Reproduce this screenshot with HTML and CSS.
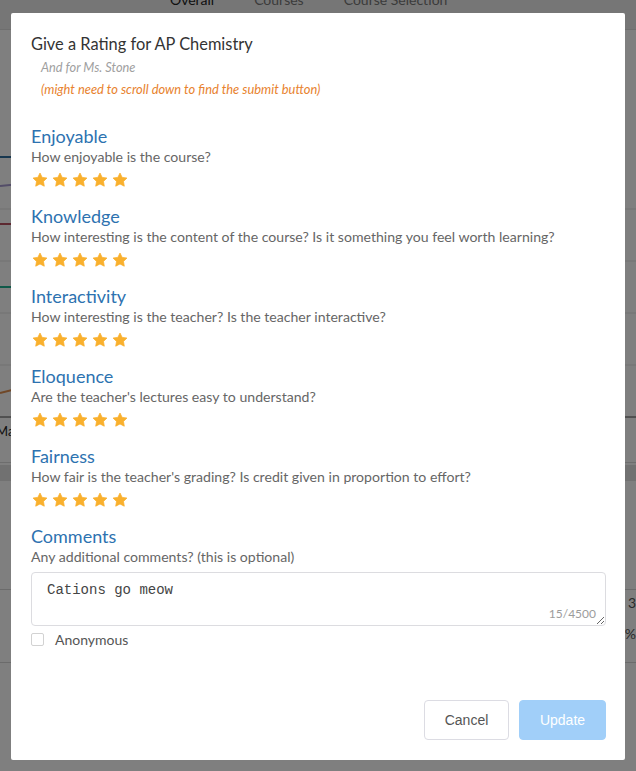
FILE: index.html
```html
<!DOCTYPE html>
<html>
<head>
<meta charset="utf-8">
<link rel="stylesheet" href="styles.css">
</head>
<body>
<svg class="defs" width="0" height="0">
  <defs>
    <symbol id="star" viewBox="0 0 24 24">
      <polygon points="12,1.6 15.2,8.1 22.4,9.1 17.2,14.1 18.4,21.3 12,17.9 5.6,21.3 6.8,14.1 1.6,9.1 8.8,8.1" stroke-linejoin="round" stroke-width="1.2"/>
    </symbol>
  </defs>
</svg>
<div class="page">
  <nav class="topnav">
    <span class="navlink active">Overall</span>
    <span class="navlink">Courses</span>
    <span class="navlink">Course Selection</span>
  </nav>
  <div class="content">
    <svg class="chart" width="636" height="420" viewBox="0 30 636 420">
      <line x1="0" y1="209" x2="636" y2="209" class="grid"/>
      <line x1="0" y1="261" x2="636" y2="261" class="grid"/>
      <line x1="0" y1="313" x2="636" y2="313" class="grid"/>
      <line x1="0" y1="365" x2="636" y2="365" class="grid"/>
      <path d="M0 157 L20 157" class="l-blue"/>
      <path d="M0 186 L20 184" class="l-purple"/>
      <path d="M0 224 L20 224" class="l-red"/>
      <path d="M0 287 L20 287" class="l-teal"/>
      <path d="M0 393 L20 388" class="l-orange"/>
      <line x1="0" y1="417" x2="636" y2="417" class="axis"/>
      <text x="-4" y="436" class="axislabel">Mar</text>
    </svg>
    <div class="lower">
      <div class="band"></div>
      <div class="stat"><span>3</span><span>%</span></div>
    </div>
  </div>
</div>
<div class="overlay"></div>
<div class="modal">
  <div class="modal-body">
    <h1 class="title">Give a Rating for AP Chemistry</h1>
    <p class="subtitle">And for Ms. Stone</p>
    <p class="hint">(might need to scroll down to find the submit button)</p>

    <section class="crit">
      <h2>Enjoyable</h2>
      <p class="q">How enjoyable is the course?</p>
      <div class="stars"><svg><use href="#star"/></svg><svg><use href="#star"/></svg><svg><use href="#star"/></svg><svg><use href="#star"/></svg><svg><use href="#star"/></svg></div>
    </section>
    <section class="crit">
      <h2>Knowledge</h2>
      <p class="q">How interesting is the content of the course? Is it something you feel worth learning?</p>
      <div class="stars"><svg><use href="#star"/></svg><svg><use href="#star"/></svg><svg><use href="#star"/></svg><svg><use href="#star"/></svg><svg><use href="#star"/></svg></div>
    </section>
    <section class="crit">
      <h2>Interactivity</h2>
      <p class="q">How interesting is the teacher? Is the teacher interactive?</p>
      <div class="stars"><svg><use href="#star"/></svg><svg><use href="#star"/></svg><svg><use href="#star"/></svg><svg><use href="#star"/></svg><svg><use href="#star"/></svg></div>
    </section>
    <section class="crit">
      <h2>Eloquence</h2>
      <p class="q">Are the teacher's lectures easy to understand?</p>
      <div class="stars"><svg><use href="#star"/></svg><svg><use href="#star"/></svg><svg><use href="#star"/></svg><svg><use href="#star"/></svg><svg><use href="#star"/></svg></div>
    </section>
    <section class="crit">
      <h2>Fairness</h2>
      <p class="q">How fair is the teacher's grading? Is credit given in proportion to effort?</p>
      <div class="stars"><svg><use href="#star"/></svg><svg><use href="#star"/></svg><svg><use href="#star"/></svg><svg><use href="#star"/></svg><svg><use href="#star"/></svg></div>
    </section>
    <section class="crit comments">
      <h2>Comments</h2>
      <p class="q">Any additional comments? (this is optional)</p>
      <div class="ta-wrap">
        <textarea class="ta">Cations go meow</textarea>
        <span class="counter">15/4500</span>
      </div>
      <label class="check"><span class="box"></span><span>Anonymous</span></label>
    </section>
  </div>
  <div class="modal-footer">
    <button class="btn btn-cancel">Cancel</button>
    <button class="btn btn-update">Update</button>
  </div>
</div>
</body>
</html>
```

FILE: styles.css
```css
* { box-sizing: border-box; }
html, body { margin: 0; padding: 0; }
body {
  width: 636px;
  height: 771px;
  overflow: hidden;
  background: #ffffff;
  font-family: "Lato", "Noto Sans", sans-serif;
}
.defs { position: absolute; width: 0; height: 0; }

.page { width: 636px; height: 771px; }
.topnav {
  height: 30px;
  background: #ececec;
  border-bottom: 1px solid #dcdcdc;
  display: flex;
  gap: 40px;
  padding-left: 170px;
  overflow: hidden;
}
.navlink {
  margin-top: -10px;
  line-height: 20px;
  font-size: 14px;
  color: #777;
}
.navlink.active { color: #222; }
.content { position: relative; }
.chart { display: block; }
.chart .grid { stroke: #e2e2e2; stroke-width: 1; }
.chart .axis { stroke: #444; stroke-width: 1; }
.chart path { fill: none; stroke-width: 2; }
.l-blue { stroke: #2f6f9f; }
.l-purple { stroke: #a79ad0; }
.l-red { stroke: #b85060; }
.l-teal { stroke: #1fb393; }
.l-orange { stroke: #e09050; }
.axislabel { font-family: "Lato", sans-serif; font-size: 13px; fill: #222; }
.lower {
  border-top: 1px solid #dadada;
  margin-top: 12px;
  height: 300px;
}
.band { height: 16px; background: #e2e2e2; margin-top: 2px; }
.stat {
  display: flex;
  flex-direction: column;
  align-items: flex-end;
  gap: 14px;
  margin-top: 108px;
  font-size: 14px;
  color: #555;
  border-top: 1px solid #d6d6d6;
  border-bottom: 1px solid #d6d6d6;
  padding: 4px 0 20px;
}

.overlay {
  position: fixed;
  inset: 0;
  background: rgba(0, 0, 0, 0.5);
}

.modal {
  position: fixed;
  left: 11px;
  top: 13px;
  width: 614px;
  height: 747px;
  background: #fff;
  border-radius: 2px;
  padding: 20px 19px 20px 20px;
  display: flex;
  flex-direction: column;
}
.modal-body { flex: 1; }
.title {
  margin: 0;
  font-size: 16.4px;
  font-weight: 400;
  line-height: 22px;
  color: #333;
}
.subtitle {
  margin: 1px 0 0 10px;
  font-size: 12.8px;
  font-style: italic;
  line-height: 22px;
  color: #a0a0a0;
}
.hint {
  margin: 0 0 0 10px;
  font-size: 12.9px;
  font-style: italic;
  line-height: 22px;
  color: #e8822e;
}
.crit { margin-top: 24px; }
.crit + .crit { margin-top: 14px; }
.crit h2 {
  margin: 0;
  font-size: 18px;
  font-weight: 400;
  line-height: 24px;
  color: #2d72b0;
}
.crit .q {
  margin: 0;
  font-size: 14.1px;
  line-height: 18px;
  color: #666;
}
.stars {
  display: flex;
  gap: 4px;
  margin-top: 4px;
  height: 20px;
  align-items: center;
  padding-left: 1px;
}
.stars svg {
  width: 16px;
  height: 16px;
  fill: #f9b02d;
  stroke: #f9b02d;
}
.ta-wrap {
  position: relative;
  margin-top: 6px;
  width: 575px;
}
.ta {
  display: block;
  width: 575px;
  height: 54px;
  border: 1px solid #dcdce0;
  border-radius: 4px;
  padding: 8px 15px 6px;
  font-family: "Liberation Mono", monospace;
  font-size: 14px;
  line-height: 18px;
  color: #444;
  resize: vertical;
  outline: none;
}
.counter {
  position: absolute;
  right: 10px;
  bottom: 5px;
  font-size: 12px;
  color: #9c9c9c;
}
.check {
  display: flex;
  align-items: center;
  gap: 11px;
  margin-top: 6px;
  height: 14px;
  font-size: 14px;
  color: #555;
}
.box {
  width: 13px;
  height: 13px;
  border: 1px solid #d2d2d2;
  border-radius: 2px;
}
.modal-footer {
  display: flex;
  justify-content: flex-end;
  gap: 10px;
}
.btn {
  height: 40px;
  border-radius: 4px;
  font-family: "Liberation Sans", Arial, sans-serif;
  font-size: 14px;
  padding: 0;
}
.btn-cancel {
  width: 85px;
  background: #fff;
  border: 1px solid #dcdce3;
  color: #555;
}
.btn-update {
  width: 87px;
  background: #a1cff9;
  border: 1px solid #a1cff9;
  color: #fff;
}
```
